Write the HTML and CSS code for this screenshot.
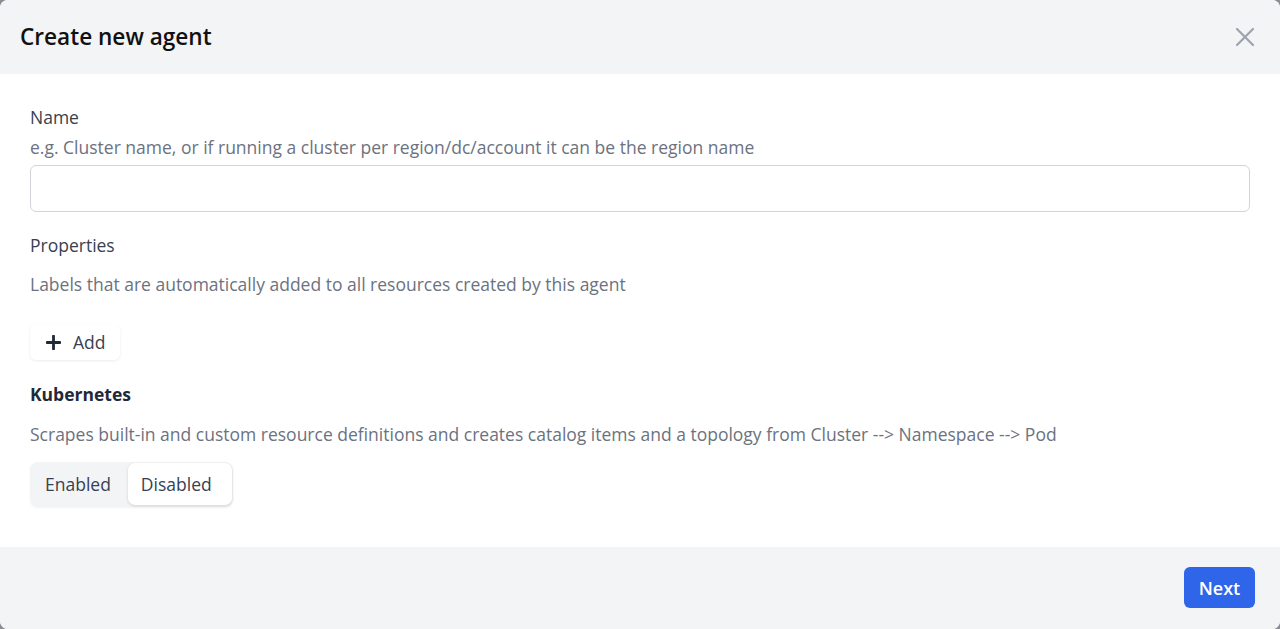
FILE: index.html
```html
<!DOCTYPE html>
<html>
<head>
<meta charset="utf-8">
<link rel="stylesheet" href="styles.css">
</head>
<body>
<div class="dialog">
  <header class="dialog-header">
    <h1 class="title">Create new agent</h1>
    <button class="close" aria-label="Close">
      <svg width="20" height="20" viewBox="0 0 20 20"><path d="M2 2 L18 18 M18 2 L2 18" stroke="#9ca3af" stroke-width="2.2" stroke-linecap="round" fill="none"/></svg>
    </button>
  </header>
  <main class="dialog-body">
    <div class="field">
      <label class="label">Name</label>
      <p class="hint hint-tight">e.g. Cluster name, or if running a cluster per region/dc/account it can be the region name</p>
      <input class="input" type="text">
    </div>
    <div class="field props">
      <label class="label">Properties</label>
      <p class="hint hint-props">Labels that are automatically added to all resources created by this agent</p>
      <button class="add-btn">
        <svg width="15" height="15" viewBox="0 0 15 15"><path d="M7.5 1 V14 M1 7.5 H14" stroke="#1f2937" stroke-width="2.8" stroke-linecap="round"/></svg>
        <span>Add</span>
      </button>
    </div>
    <div class="field kube">
      <label class="label bold">Kubernetes</label>
      <p class="hint hint-kube">Scrapes built-in and custom resource definitions and creates catalog items and a topology from Cluster --&gt; Namespace --&gt; Pod</p>
      <div class="toggle">
        <span class="opt">Enabled</span>
        <span class="opt active">Disabled</span>
      </div>
    </div>
  </main>
  <footer class="dialog-footer">
    <button class="next">Next</button>
  </footer>
</div>
</body>
</html>
```

FILE: styles.css
```css
* { box-sizing: border-box; }
html, body {
  margin: 0;
  padding: 0;
  height: 100%;
  background: #8a8d93;
}
body {
  font-family: "Open Sans", "Liberation Sans", sans-serif;
  color: #374151;
}
.dialog {
  width: 1280px;
  height: 629px;
  background: #fff;
  border-radius: 8px;
  overflow: hidden;
  display: flex;
  flex-direction: column;
}
.dialog-header {
  height: 74px;
  background: #f3f4f6;
  display: flex;
  align-items: center;
  justify-content: space-between;
  padding: 0 25px 0 20px;
  flex: none;
}
.title {
  margin: 0;
  font-size: 22.6px;
  font-weight: 600;
  color: #111;
  line-height: 28px;
}
.close {
  border: 0;
  background: transparent;
  padding: 0;
  width: 20px;
  height: 20px;
  display: flex;
}
.dialog-body {
  flex: 1;
  padding: 31px 30px 0;
}
.field { display: flex; flex-direction: column; }
.label {
  font-size: 17.5px;
  line-height: 24px;
  color: #374151;
}
.label.bold { font-weight: 700; color: #1f2937; }
.hint {
  margin: 0;
  font-size: 17.5px;
  line-height: 24px;
  color: #6b7280;
}
.hint-tight { margin-top: 6px; }
.input {
  margin-top: 6px;
  height: 47px;
  width: 100%;
  border: 1px solid #d1d5db;
  border-radius: 6px;
  background: #fff;
}
.props { margin-top: 21px; }
.hint-props { margin-top: 15px; }
.add-btn {
  margin-top: 28px;
  align-self: flex-start;
  width: 90px;
  height: 36px;
  border: 0;
  border-radius: 6px;
  background: #fff;
  box-shadow: 0 1px 3px rgba(0,0,0,0.08);
  display: flex;
  align-items: center;
  gap: 12px;
  padding: 0 0 0 16px;
  font-family: inherit;
  font-size: 17.5px;
  color: #374151;
}
.kube { margin-top: 22px; }
.hint-kube { margin-top: 16px; }
.toggle {
  margin-top: 16px;
  align-self: flex-start;
  display: flex;
  background: #f3f4f6;
  border-radius: 8px;
  padding: 1px 1px 2px 1px;
  height: 45px;
  box-shadow: 0 1px 2px rgba(0,0,0,0.05);
}
.opt {
  display: flex;
  align-items: center;
  padding: 0 17px 0 14px;
  font-size: 17.5px;
  color: #374151;
  border-radius: 7px;
}
.opt.active {
  background: #fff;
  box-shadow: 0 1px 3px rgba(0,0,0,0.15);
  padding: 0 20px 0 13px;
}
.dialog-footer {
  height: 82px;
  flex: none;
  background: #f3f4f6;
  display: flex;
  justify-content: flex-end;
  align-items: flex-start;
  padding: 20px 25px 0 0;
}
.next {
  width: 71px;
  height: 41px;
  border: 0;
  border-radius: 6px;
  background: #2f65e9;
  color: #fff;
  font-family: inherit;
  font-size: 18px;
  font-weight: 600;
}
```
